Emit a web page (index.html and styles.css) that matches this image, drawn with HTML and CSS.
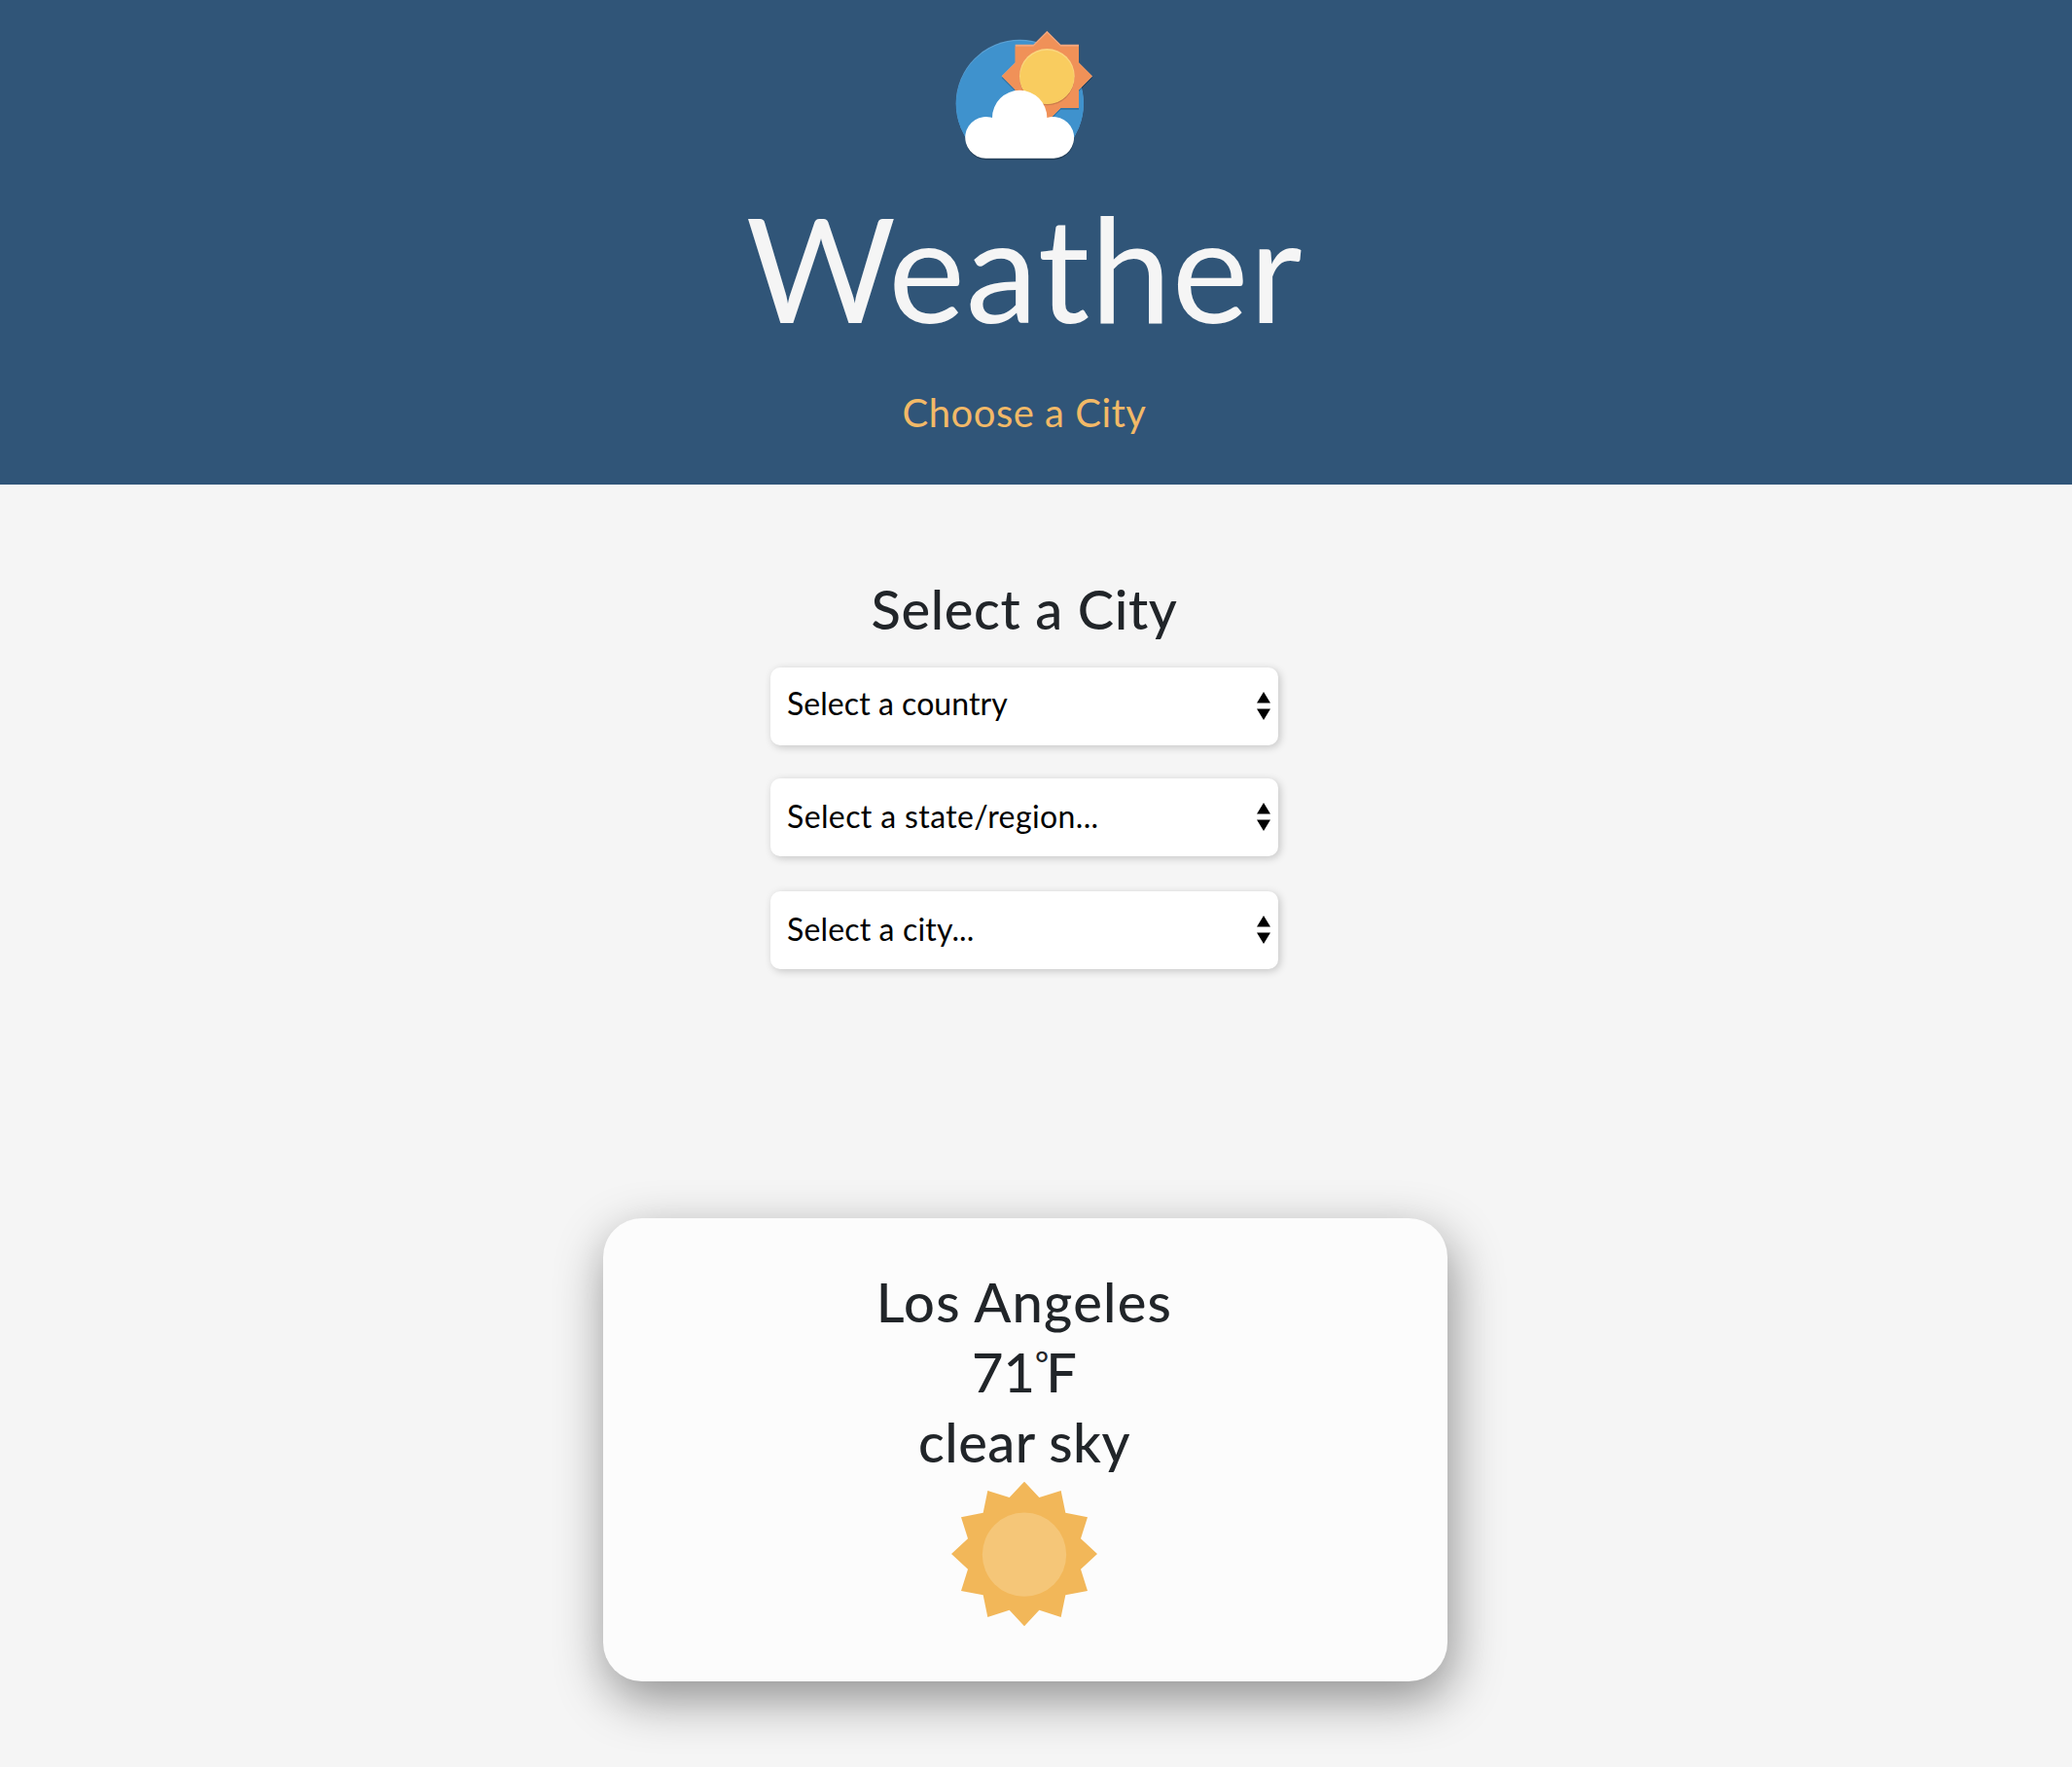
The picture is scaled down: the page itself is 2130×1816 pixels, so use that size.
FILE: index.html
```html
<!DOCTYPE html>
<html lang="en">
<head>
<meta charset="utf-8">
<title>Weather</title>
<link rel="stylesheet" href="styles.css">
</head>
<body>
<header class="hero">
  <svg class="logo" viewBox="57 30 444 405" aria-hidden="true">
    <defs>
      <clipPath id="sky-area"><path d="M57 30h444v350H57z"/></clipPath>
      <clipPath id="disc"><circle cx="265" cy="259" r="197"/></clipPath>
    </defs>
    <g clip-path="url(#sky-area)">
      <circle cx="265" cy="262" r="197" fill="#2c5078"/>
      <circle cx="265" cy="259" r="197" fill="#5ba0d3"/>
      <g clip-path="url(#disc)"><circle cx="265" cy="263" r="197" fill="#3f92cd"/></g>
    </g>
    <path fill="#000" opacity=".2" d="M349 40l42 42h56v56l42 42-42 42v56h-56l-42 42-42-42h-56v-56l-42-42 42-42V82h56z"/>
    <path fill="#f3a67c" d="M349 35l42 42h56v56l42 42-42 42v56h-56l-42 42-42-42h-56v-56l-42-42 42-42V77h56z"/>
    <path fill="#f09158" d="M349 41l42 42h56v51l41 41-41 42v56h-56l-42 42-42-42h-56v-56l-41-42 41-41V83h56z"/>
    <circle cx="349" cy="181" r="84" fill="#cb7b4b"/>
    <circle cx="349" cy="175" r="85" fill="#fad67e"/>
    <circle cx="349" cy="178" r="83" fill="#f9cc5f"/>
    <path fill="#000" opacity=".25" d="M160 433a64 64 0 0 1-62-64h334a64 64 0 0 1-62 64z"/>
    <path fill="#fff" d="M160 428a64 64 0 1 1 20-125a84.500 84.500 0 0 1 169 0a64 64 0 1 1 21 125z"/>
  </svg>
  <h1 class="title">Weather</h1>
  <a class="choose">Choose a City</a>
</header>
<main class="content">
  <section class="picker">
    <h2 class="heading select-heading">Select a City</h2>
    <div class="select first"><span class="label country">Select a country</span><svg class="arrows" viewBox="0 0 14 29"><path d="M7 0l7 11.500H0zM7 29l7-11.500H0z"/></svg></div>
    <div class="select second"><span class="label region">Select a state/region...</span><svg class="arrows" viewBox="0 0 14 29"><path d="M7 0l7 11.500H0zM7 29l7-11.500H0z"/></svg></div>
    <div class="select"><span class="label city">Select a city...</span><svg class="arrows" viewBox="0 0 14 29"><path d="M7 0l7 11.500H0zM7 29l7-11.500H0z"/></svg></div>
  </section>
  <section class="card">
    <h2 class="heading place">Los Angeles</h2>
    <h2 class="heading temp">71<span class="degree">°</span>F</h2>
    <h2 class="heading sky">clear sky</h2>
    <svg class="sun" viewBox="54 66 450 450" aria-hidden="true">
      <path fill="#f2b759" d="M279 68l46 49 67-21 14 68 68 14-21 66 51 47-51 47 21 67-68 13-14 68-67-22-46 50-46-50-67 22-14-68-68-13 21-67-51-47 51-47-21-66 68-14 14-68 67 21z"/>
      <circle cx="279" cy="293" r="129.500" fill="#f5c678"/>
    </svg>
  </section>
</main>
</body>
</html>
```
FILE: styles.css
```css
* { box-sizing: border-box; }

body {
  margin: 0;
  min-height: 1816px;
  background: #f5f5f5;
  color: #212529;
  font-family: Lato, "Liberation Sans", sans-serif;
}

h1, h2 { margin: 0; }

.hero {
  display: flex;
  flex-direction: column;
  align-items: center;
  height: 498px;
  padding: 30px 24px 0 0;
  background: #305578;
}

.logo { width: 148px; height: 135px; }

.title {
  margin-top: 20px;
  font-size: 149px;
  font-weight: 400;
  line-height: 180px;
  letter-spacing: .8px;
  color: #f5f5f5;
}

.choose {
  margin-top: 35px;
  font-size: 40px;
  line-height: 48px;
  letter-spacing: .5px;
  color: #f2b967;
}

.content {
  display: flex;
  flex-direction: column;
  align-items: center;
  padding-top: 92px;
}

.picker {
  display: flex;
  flex-direction: column;
  align-items: center;
  width: 100%;
  height: 662px;
  padding-right: 24px;
}

.heading {
  font-size: 56px;
  font-weight: 500;
  line-height: 72px;
  white-space: nowrap;
}

.select-heading { margin-bottom: 24px; letter-spacing: .65px; }

.select {
  display: flex;
  justify-content: space-between;
  align-items: flex-start;
  width: 522px;
  height: 80px;
  margin-bottom: 36px;
  padding: 19px 8px 0 17px;
  border-radius: 10px;
  background: #fff;
  box-shadow: 2px 2px 8px rgba(0, 0, 0, .2);
  color: #000;
}

.first { margin-bottom: 34px; padding-top: 17px; }

.label { font-size: 32px; line-height: 40px; }
.country { letter-spacing: .05px; }
.region { letter-spacing: .38px; }
.city { letter-spacing: .15px; }

.arrows { width: 14px; height: 29px; margin-top: 6px; }
.first .arrows { margin-top: 8px; }

.card {
  display: flex;
  flex-direction: column;
  align-items: center;
  width: 868px;
  height: 476px;
  margin-right: 22px;
  padding: 50px 2px 0 0;
  border-radius: 40px;
  background: #fcfcfc;
  box-shadow: 4px 18px 52px rgba(0, 0, 0, .42);
}

.place { letter-spacing: 1.25px; }
.sky { letter-spacing: .5px; }

.degree {
  font-size: 34px;
  line-height: 0;
  letter-spacing: -3px;
  vertical-align: 17px;
}

.sun { width: 150px; height: 150px; margin-top: 4px; }
```
